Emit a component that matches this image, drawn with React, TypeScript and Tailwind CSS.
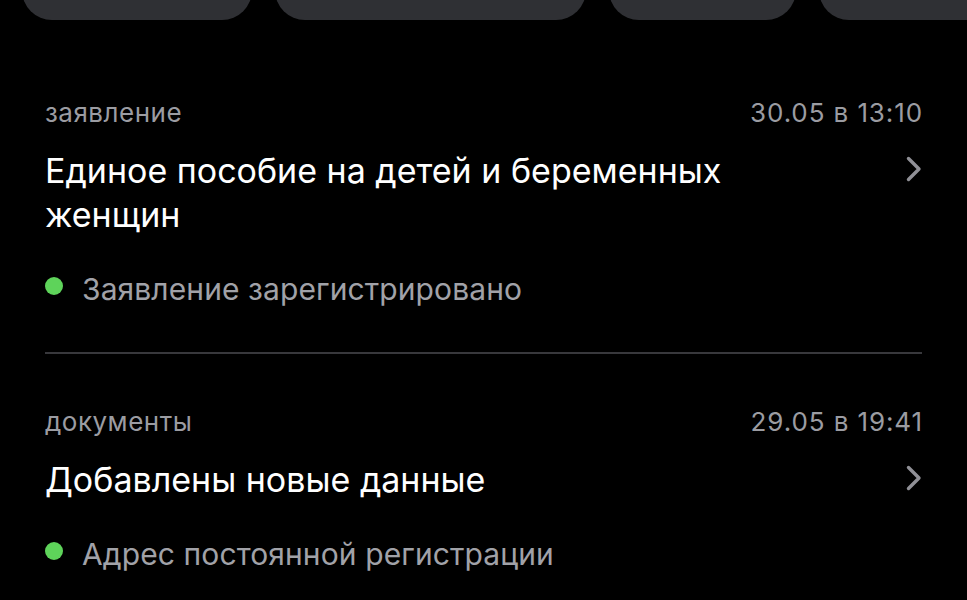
import React from "react";

type Item = {
  kind: string;
  date: string;
  title: string;
  status: string;
};

const items: Item[] = [
  {
    kind: "заявление",
    date: "30.05 в 13:10",
    title: "Единое пособие на детей и беременных женщин",
    status: "Заявление зарегистрировано",
  },
  {
    kind: "документы",
    date: "29.05 в 19:41",
    title: "Добавлены новые данные",
    status: "Адрес постоянной регистрации",
  },
];

function Chevron() {
  return (
    <svg width="16" height="26" viewBox="0 0 16 26" fill="none" className="shrink-0 -mt-[4px]">
      <path d="M2.5 2.5 L13 13 L2.5 23.5" stroke="#909096" strokeWidth="3.4" strokeLinecap="round" strokeLinejoin="round" />
    </svg>
  );
}

export default function App() {
  return (
    <div className="w-[967px] h-[600px] bg-black overflow-hidden" style={{ fontFamily: "Inter, 'Noto Sans', sans-serif" }}>
      {/* filter chips, cut off at the top */}
      <div className="h-[20px] overflow-hidden relative">
        <div className="flex gap-[23px] pl-[22px] -mt-[40px]">
          <div className="w-[230px] h-[60px] rounded-[30px] bg-[#2f3034] shrink-0" />
          <div className="w-[311px] h-[60px] rounded-[30px] bg-[#2f3034] shrink-0" />
          <div className="w-[187px] h-[60px] rounded-[30px] bg-[#2f3034] shrink-0" />
          <div className="w-[200px] h-[60px] rounded-[30px] bg-[#2f3034] shrink-0" />
        </div>
      </div>

      <div className="px-[45px]">
        {items.map((it, i) => (
          <div key={i}>
            {i > 0 && <div className="h-[2px] bg-[#38383c] mt-[45px]" />}
            <div className={i === 0 ? "pt-[77px]" : "pt-[52px]"}>
              <div className="flex justify-between items-center h-[30px] text-[26px] text-[#9b9ca2]">
                <span className="tracking-[0.5px]">{it.kind}</span>
                <span className="tracking-[0.9px] -mr-[1px]">{it.date}</span>
              </div>
              <div className="flex justify-between items-start mt-[22px]">
                <div className="text-[34px] leading-[44px] text-white max-w-[720px]">{it.title}</div>
                <div className="h-[44px] flex items-center">
                  <Chevron />
                </div>
              </div>
              <div className="flex items-center mt-[34px] h-[36px]">
                <span className="w-[18px] h-[18px] rounded-full bg-[#5ed35a] -mt-[6px] mr-[19px]" />
                <span className="text-[30px] text-[#a1a2a8] tracking-[0.1px]">{it.status}</span>
              </div>
            </div>
          </div>
        ))}
      </div>
    </div>
  );
}
